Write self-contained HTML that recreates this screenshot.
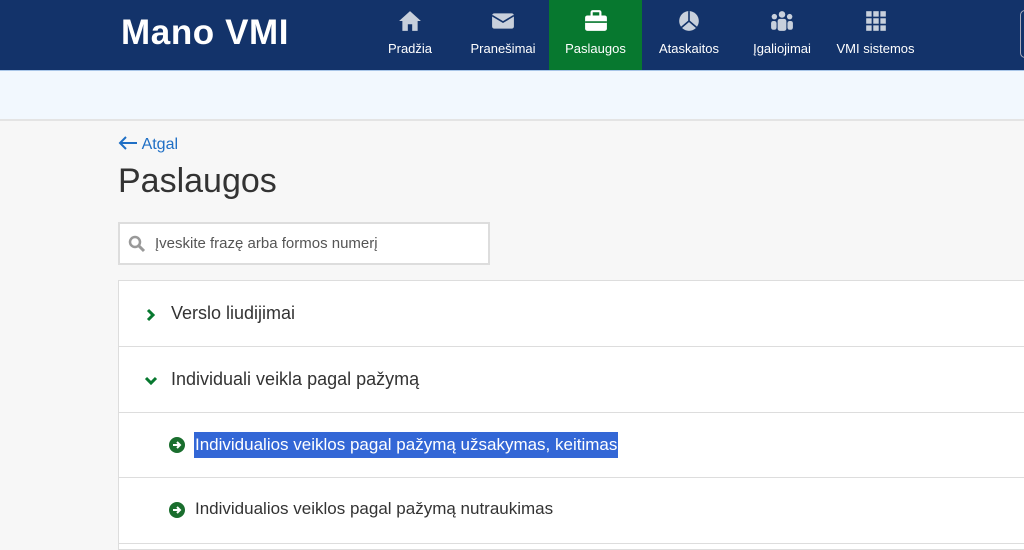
<!DOCTYPE html>
<html><head><meta charset="utf-8"><style>
*{margin:0;padding:0;box-sizing:border-box}
body{width:1024px;height:542px;overflow:hidden;background:#f7f7f7;font-family:"Liberation Sans",sans-serif;position:relative}
.hdr{position:absolute;left:0;top:0;width:1024px;height:70px;background:#13336a}
.logo{position:absolute;left:121px;top:13px;color:#fff;font-size:35px;font-weight:bold;letter-spacing:0.6px}
.nav{position:absolute;top:0;height:70px;color:#fff;font-size:13px;text-align:center}
.nav svg{position:absolute;top:10px;left:50%;margin-left:-12px}
.nav span{position:absolute;top:41px;left:0;width:100%}
.band{position:absolute;left:0;top:70px;width:1024px;height:51px;background:#f2f8fe;border-top:1px solid #a9c6e8;border-bottom:2px solid #e4e4e4}
.back{position:absolute;left:118px;top:136px;color:#1f6fc5;font-size:16px}
h1{position:absolute;left:118px;top:162px;font-size:34px;font-weight:normal;color:#333}
.search{position:absolute;left:118px;top:222px;width:372px;height:43px;background:#fff;border:2px solid #ddd}
.search span{position:absolute;left:35px;top:11px;font-size:15px;color:#555}
.card{position:absolute;left:118px;top:280px;width:920px;height:270px;background:#fff;border:1px solid #ddd}
.row{position:absolute;left:0;width:100%;border-bottom:1px solid #ddd;font-size:18px;color:#333}
.sel{background:#3367d6;color:#fff;padding:3px 1px}
</style></head><body>
<div class="hdr">
<div class="logo">Mano VMI</div>
<div class="nav" style="left:370px;width:80px"><svg width="24" height="22" viewBox="0 0 22 20"><path d="M11 1 1 10h3v9h5v-6h4v6h5v-9h3z" fill="#c8d0dc"/></svg><span>Pradžia</span></div>
<div class="nav" style="left:457px;width:92px"><svg width="24" height="22" viewBox="0 0 22 20"><rect x="1" y="3" width="20" height="14" rx="2" fill="#c8d0dc"/><path d="M1 5l10 6 10-6" stroke="#13336a" stroke-width="1.5" fill="none"/></svg><span>Pranešimai</span></div>
<div class="nav" style="left:549px;width:93px;background:#07782f"><svg width="24" height="22" viewBox="0 0 22 20"><rect x="1" y="5" width="20" height="14" rx="2" fill="#fff"/><rect x="7" y="1" width="8" height="5" rx="1" fill="none" stroke="#fff" stroke-width="2"/><path d="M1 11h20" stroke="#07782f" stroke-width="1.5"/></svg><span>Paslaugos</span></div>
<div class="nav" style="left:645px;width:88px"><svg width="24" height="22" viewBox="0 0 22 20"><circle cx="11" cy="10" r="9" fill="#c8d0dc"/><path d="M11 10V1M11 10l7 6M11 10l-7 6" stroke="#13336a" stroke-width="1.5"/></svg><span>Ataskaitos</span></div>
<div class="nav" style="left:738px;width:88px"><svg width="24" height="22" viewBox="0 0 22 20"><circle cx="11" cy="4" r="3" fill="#c8d0dc"/><circle cx="4" cy="6" r="2.5" fill="#c8d0dc"/><circle cx="18" cy="6" r="2.5" fill="#c8d0dc"/><rect x="7" y="8" width="8" height="11" rx="2" fill="#c8d0dc"/><rect x="1" y="10" width="5" height="8" rx="2" fill="#c8d0dc"/><rect x="16" y="10" width="5" height="8" rx="2" fill="#c8d0dc"/></svg><span>Įgaliojimai</span></div>
<div class="nav" style="left:828px;width:95px"><svg width="24" height="22" viewBox="0 0 22 20" fill="#c8d0dc"><rect x="2" y="1" width="5" height="5"/><rect x="8.5" y="1" width="5" height="5"/><rect x="15" y="1" width="5" height="5"/><rect x="2" y="7.5" width="5" height="5"/><rect x="8.5" y="7.5" width="5" height="5"/><rect x="15" y="7.5" width="5" height="5"/><rect x="2" y="14" width="5" height="5"/><rect x="8.5" y="14" width="5" height="5"/><rect x="15" y="14" width="5" height="5"/></svg><span>VMI sistemos</span></div>
<div style="position:absolute;left:1020px;top:10px;width:30px;height:48px;border:1px solid #aab;border-radius:5px"></div>
</div>
<div class="band"></div>
<div class="back"><svg width="20" height="14" viewBox="0 0 20 14" style="vertical-align:-1px"><path d="M19 7H2M8 1 2 7l6 6" stroke="#1f6fc5" stroke-width="2" fill="none"/></svg> Atgal</div>
<h1>Paslaugos</h1>
<div class="search"><svg width="18" height="18" viewBox="0 0 18 18" style="position:absolute;left:8px;top:11px"><circle cx="7" cy="7" r="5" stroke="#999" stroke-width="2.5" fill="none"/><path d="M11 11l5 5" stroke="#999" stroke-width="3"/></svg><span>Įveskite frazę arba formos numerį</span></div>
<div class="card">
<div class="row" style="top:0;height:66px"><svg width="12" height="14" viewBox="0 0 12 14" style="position:absolute;left:26px;top:27px"><path d="M3 2l5 5-5 5" stroke="#07782f" stroke-width="3" fill="none"/></svg><span style="position:absolute;left:52px;top:22px">Verslo liudijimai</span></div>
<div class="row" style="top:66px;height:66px"><svg width="14" height="12" viewBox="0 0 14 12" style="position:absolute;left:25px;top:28px"><path d="M2 3l5 5 5-5" stroke="#07782f" stroke-width="3" fill="none"/></svg><span style="position:absolute;left:52px;top:22px">Individuali veikla pagal pažymą</span></div>
<div class="row" style="top:132px;height:65px;font-size:17px"><svg width="16" height="16" viewBox="0 0 16 16" style="position:absolute;left:50px;top:24px"><circle cx="8" cy="8" r="8" fill="#1a6e2e"/><path d="M4 8h7M8 5l3 3-3 3" stroke="#fff" stroke-width="2" fill="none"/></svg><span class="sel" style="position:absolute;left:75px;top:19px">Individualios veiklos pagal pažymą užsakymas, keitimas</span></div>
<div class="row" style="top:197px;height:66px;font-size:17px"><svg width="16" height="16" viewBox="0 0 16 16" style="position:absolute;left:50px;top:24px"><circle cx="8" cy="8" r="8" fill="#1a6e2e"/><path d="M4 8h7M8 5l3 3-3 3" stroke="#fff" stroke-width="2" fill="none"/></svg><span style="position:absolute;left:76px;top:21px">Individualios veiklos pagal pažymą nutraukimas</span></div>
</div>
</body></html>
